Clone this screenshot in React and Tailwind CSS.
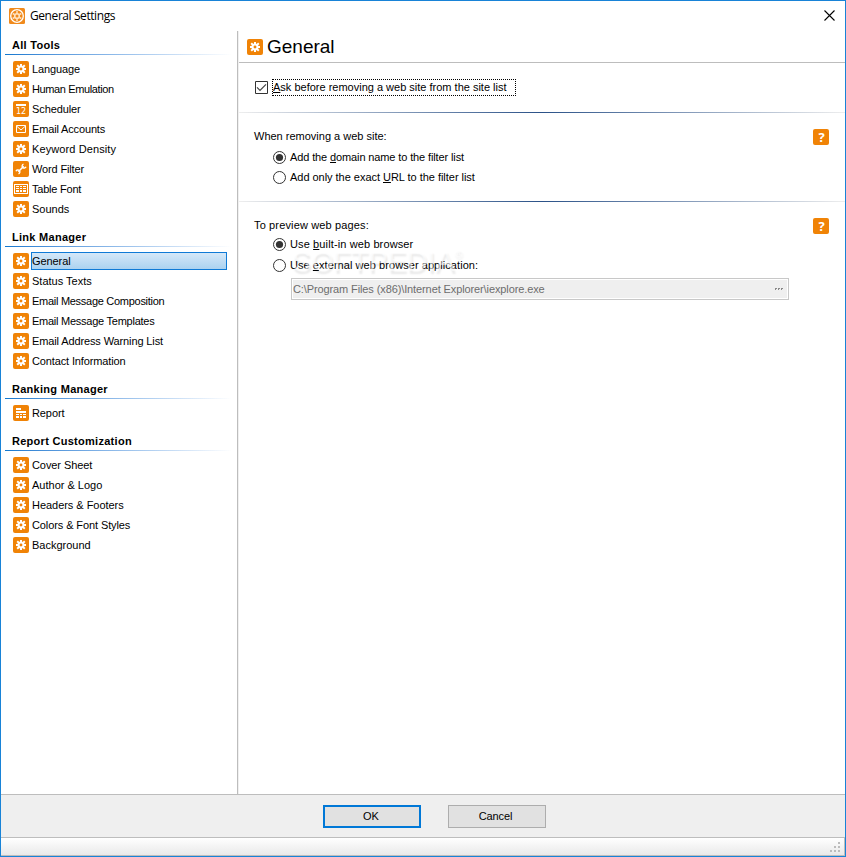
import React, { useState } from 'react';

const sections = [
  {
    title: 'All Tools',
    items: [
      { label: 'Language', icon: 'gear', tracking: 'tracking-[-0.1px]' },
      { label: 'Human Emulation', icon: 'gear', tracking: 'tracking-[-0.38px]' },
      { label: 'Scheduler', icon: 'calendar', tracking: 'tracking-[-0.1px]' },
      { label: 'Email Accounts', icon: 'mail', tracking: 'tracking-[-0.15px]' },
      { label: 'Keyword Density', icon: 'gear', tracking: 'tracking-[0.1px]' },
      { label: 'Word Filter', icon: 'wrench', tracking: 'tracking-[-0.15px]' },
      { label: 'Table Font', icon: 'table', tracking: 'tracking-[-0.22px]' },
      { label: 'Sounds', icon: 'gear' },
    ],
  },
  {
    title: 'Link Manager',
    items: [
      { label: 'General', icon: 'gear', tracking: 'tracking-[-0.08px]' },
      { label: 'Status Texts', icon: 'gear' },
      { label: 'Email Message Composition', icon: 'gear', tracking: 'tracking-[-0.28px]' },
      { label: 'Email Message Templates', icon: 'gear', tracking: 'tracking-[-0.25px]' },
      { label: 'Email Address Warning List', icon: 'gear', tracking: 'tracking-[-0.12px]' },
      { label: 'Contact Information', icon: 'gear', tracking: 'tracking-[-0.13px]' },
    ],
  },
  {
    title: 'Ranking Manager',
    items: [{ label: 'Report', icon: 'report', tracking: 'tracking-[-0.1px]' }],
  },
  {
    title: 'Report Customization',
    items: [
      { label: 'Cover Sheet', icon: 'gear', tracking: 'tracking-[-0.08px]' },
      { label: 'Author & Logo', icon: 'gear' },
      { label: 'Headers & Footers', icon: 'gear', tracking: 'tracking-[-0.04px]' },
      { label: 'Colors & Font Styles', icon: 'gear', tracking: 'tracking-[-0.1px]' },
      { label: 'Background', icon: 'gear' },
    ],
  },
];

function Icon({ name }) {
  return (
    <svg width="16" height="16" viewBox="0 0 16 16" className="shrink-0">
      <rect width="16" height="16" rx="2" fill="#f08306" />
      {name === 'gear' && (
        <g stroke="#fff" fill="none">
          <circle cx="8" cy="8" r="2.5" strokeWidth="2.1" />
          <path d="M8 3v2.2M8 10.8V13M3 8h2.2M10.8 8H13M4.2 4.2l1.7 1.7M10.1 10.1l1.7 1.7M4.2 11.8l1.7-1.7M10.1 5.9l1.7-1.7" strokeWidth="2" />
        </g>
      )}
      {name === 'calendar' && (
        <g>
          <path d="M3 3h10v2H3z" fill="#fff" />
          <text x="8" y="13" textAnchor="middle" fontSize="8" fontFamily="DejaVu Sans" fill="#fff">12</text>
        </g>
      )}
      {name === 'mail' && (
        <path d="M3.5 4.5h9v7h-9zM3.5 5l4.5 4 4.5-4" fill="none" stroke="#fff" />
      )}
      {name === 'wrench' && (
        <g stroke="#fff" fill="none">
          <path d="M5.3 10.7l5.4-5.4" strokeWidth="1.5" />
          <path d="M10.5 3.2a2 2 0 1 0 2.5 2.6M5.5 12.8a2 2 0 1 0-2.5-2.6" strokeWidth="1.4" />
        </g>
      )}
      {name === 'table' && (
        <g shapeRendering="crispEdges">
          <path d="M1 3h14v1H1zM1 12h14v1H1zM1 3h1v10H1zM14 3h1v10h-1z" fill="#fff" />
          <path d="M3 5h3v1H3zM7 5h2v1H7zM10 5h3v1h-3zM3 7h3v1H3zM7 7h2v1H7zM10 7h3v1h-3zM3 9h3v2H3zM7 9h2v2H7zM10 9h3v2h-3z" fill="#fff" />
        </g>
      )}
      {name === 'report' && (
        <path
          d="M3 3h5v2H3zM3 6h10v2H3zM3 9h3v1H3zM7 9h2v1H7zM10 9h3v1h-3zM3 11h3v2H3zM7 11h2v2H7zM10 11h3v2h-3z"
          fill="#fff"
          shapeRendering="crispEdges"
        />
      )}
      {name === 'help' && (
        <text x="8.6" y="12.7" textAnchor="middle" fontSize="13" fontWeight="bold" fontFamily="Open Sans" fill="#fff">?</text>
      )}
    </svg>
  );
}

function AppIcon() {
  return (
    <svg width="16" height="16" viewBox="0 0 16 16" className="shrink-0">
      <rect width="16" height="16" rx="1.5" fill="#f08a1c" />
      <circle cx="8" cy="8" r="6.3" fill="none" stroke="#fff" strokeWidth="1.3" />
      <circle cx="8" cy="8" r="2.3" fill="none" stroke="#ffe3c0" strokeWidth="1.6" />
      <path d="M8 3v2.5M8 10.5V13M3.7 5.5l2 1.2M10.3 9.3l2 1.2M3.7 10.5l2-1.2M10.3 6.7l2-1.2" stroke="#ffe3c0" strokeWidth="1.5" />
    </svg>
  );
}

function Radio({ checked, onClick, tracking, children }) {
  return (
    <button type="button" role="radio" aria-checked={checked} onClick={onClick} className="flex h-5 items-center gap-1">
      <svg width="13" height="13" viewBox="0 0 13 13">
        <circle cx="6.5" cy="6.5" r="6" fill="#fff" stroke="#333" />
        {checked && <circle cx="6.5" cy="6.5" r="3.6" fill="#333" />}
      </svg>
      <span className={tracking}>{children}</span>
    </button>
  );
}

function Divider() {
  return <div className="h-px bg-linear-to-r from-[#eeeeee] via-[#2b5288] to-[#eeeeee]" />;
}

function App() {
  const [selected, setSelected] = useState('General');
  const [ask, setAsk] = useState(true);
  const [removeMode, setRemoveMode] = useState('domain');
  const [browser, setBrowser] = useState('builtin');

  return (
    <div className="flex h-[857px] w-[846px] flex-col border border-[#1883d7] bg-white font-['Liberation_Sans',Arial,sans-serif] text-[11px] leading-[14px] text-black">
      {/* Title bar */}
      <div className="flex h-[30px] shrink-0 items-center pr-[10px] pb-px pl-2">
        <AppIcon />
        <span className="ml-[5px] grow font-['Open_Sans',sans-serif] text-xs tracking-[-0.42px]">General Settings</span>
        <svg width="11" height="11" viewBox="0 0 11 11">
          <path d="M.5.5l10 10M10.5.5l-10 10" stroke="#000" strokeWidth="1.1" />
        </svg>
      </div>

      <div className="flex min-h-0 grow">
        {/* Sidebar */}
        <nav className="flex w-[237px] shrink-0 flex-col gap-[9px] border-r border-[#bdbdbd] pt-[5px]">
          {sections.map((section) => (
            <div key={section.title}>
              <h2 className="h-[18px] pl-[11px] leading-[18px] font-bold tracking-[0.28px]">{section.title}</h2>
              <div className="mr-[5px] ml-1 h-px bg-linear-to-r from-[#0f78cf] to-white" />
              <ul className="pt-1">
                {section.items.map((item) => (
                  <li key={item.label} className="flex h-5 items-center gap-[2px] pr-[10px] pl-3" onClick={() => setSelected(item.label)}>
                    <Icon name={item.icon} />
                    <span
                      className={`h-[18px] border leading-4 ${item.tracking || ''} ${
                        selected === item.label
                          ? 'grow border-[#0f7ad6] bg-linear-to-b from-[#d5e8f8] to-[#abd2f0]'
                          : 'border-transparent'
                      }`}
                    >
                      {item.label}
                    </span>
                  </li>
                ))}
              </ul>
            </div>
          ))}
        </nav>

        {/* Content */}
        <main className="relative flex grow flex-col border-l border-[#f0f0f0]">
          <div className="flex h-8 items-center gap-1 border-b border-[#bdbdbd] pl-2">
            <Icon name="gear" />
            <h1 className="pt-px text-[19px] leading-6">General</h1>
          </div>

          <div className="flex h-[49px] items-center pl-4">
            <button type="button" role="checkbox" aria-checked={ask} onClick={() => setAsk(!ask)} className="flex items-center gap-1">
              <svg width="13" height="13" viewBox="0 0 13 13">
                <path d="M.5.5h12v12H.5z" fill="#fff" stroke="#333" />
                {ask && <path d="M2 6.3l3 3L11 3.3" fill="none" stroke="#444" strokeWidth="1.2" />}
              </svg>
              <span className="h-[17px] w-[244px] border border-dotted border-black text-left leading-[15px]">
                <u>A</u>sk before removing a web site from the site list
              </span>
            </button>
          </div>
          <Divider />

          <section className="flex h-[88px] justify-between pt-4 pr-4 pl-[15px]">
            <div>
              <p>When removing a web site:</p>
              <div className="flex flex-col pt-1 pl-[19px]">
                <Radio checked={removeMode === 'domain'} onClick={() => setRemoveMode('domain')} tracking="tracking-[-0.12px]">
                  Add the <u>d</u>omain name to the filter list
                </Radio>
                <Radio checked={removeMode === 'url'} onClick={() => setRemoveMode('url')} tracking="tracking-[-0.03px]">
                  Add only the exact <u>U</u>RL to the filter list
                </Radio>
              </div>
            </div>
            <Icon name="help" />
          </section>
          <Divider />

          <section className="flex justify-between pt-4 pr-4 pl-[15px]">
            <div>
              <p className="tracking-[0.14px]">To preview web pages:</p>
              <div className="flex flex-col gap-px pt-[2px] pl-[19px]">
                <Radio checked={browser === 'builtin'} onClick={() => setBrowser('builtin')} tracking="tracking-[0.12px]">
                  Use <u>b</u>uilt-in web browser
                </Radio>
                <Radio checked={browser === 'external'} onClick={() => setBrowser('external')} tracking="tracking-[0.06px]">
                  Use <u>e</u>xternal web browser application:
                </Radio>
              </div>
              <div className="mt-[3px] ml-[37px] flex h-[22px] w-[498px] items-center justify-between border border-[#c8c8c8] bg-[#efefef] pr-[5px] pb-px pl-px text-[#6d6d6d] shadow-[inset_0_0_0_1px_#fff]">
                <span className="tracking-[-0.11px]">C:\Program Files (x86)\Internet Explorer\iexplore.exe</span>
                <svg width="8" height="2" viewBox="0 0 8 2" shapeRendering="crispEdges">
                  <path d="M0 0h2v1H0zM3 0h2v1H3zM6 0h2v1H6zM0 1h1v1H0zM3 1h1v1H3zM6 1h1v1H6z" fill="#888" />
                </svg>
              </div>
            </div>
            <Icon name="help" />
          </section>

          {/* Embossed watermark over the radio group */}
          <div aria-hidden="true" className="pointer-events-none absolute top-[214px] left-[53px] flex text-[29px] leading-8 text-white/55 [text-shadow:1px_3px_2px_rgba(0,0,0,0.09)]">
            <span className="tracking-[-0.2px]">SOFTPEDIA</span>
            <span className="text-[11px] leading-4">®</span>
          </div>
        </main>
      </div>

      {/* Buttons */}
      <div className="flex h-[43px] shrink-0 justify-center gap-[27px] border-t border-[#bdbdbd] bg-[#efefef] pt-[10px] pr-px pl-6">
        <button type="button" className="h-[23px] w-[98px] border-2 border-[#0078d7] bg-[#e1e1e1] pr-[2px] pb-px">OK</button>
        <button type="button" className="h-[23px] w-[98px] border border-[#adadad] bg-[#e1e1e1] pr-[3px] pb-px tracking-[-0.1px]">Cancel</button>
      </div>

      {/* Status bar */}
      <div className="flex h-[19px] shrink-0 items-end justify-end border border-l-0 border-[#bdbdbd] bg-linear-to-b from-white to-[#e9e9e9] pr-[3px] pb-[2px]">
        <svg width="11" height="11" viewBox="0 0 11 11" shapeRendering="crispEdges">
          <path d="M8 0h2v2H8zM4 4h2v2H4zM8 4h2v2H8zM0 8h2v2H0zM4 8h2v2H4zM8 8h2v2H8z" fill="#bcbcbc" />
        </svg>
      </div>
    </div>
  );
}

export default App;
